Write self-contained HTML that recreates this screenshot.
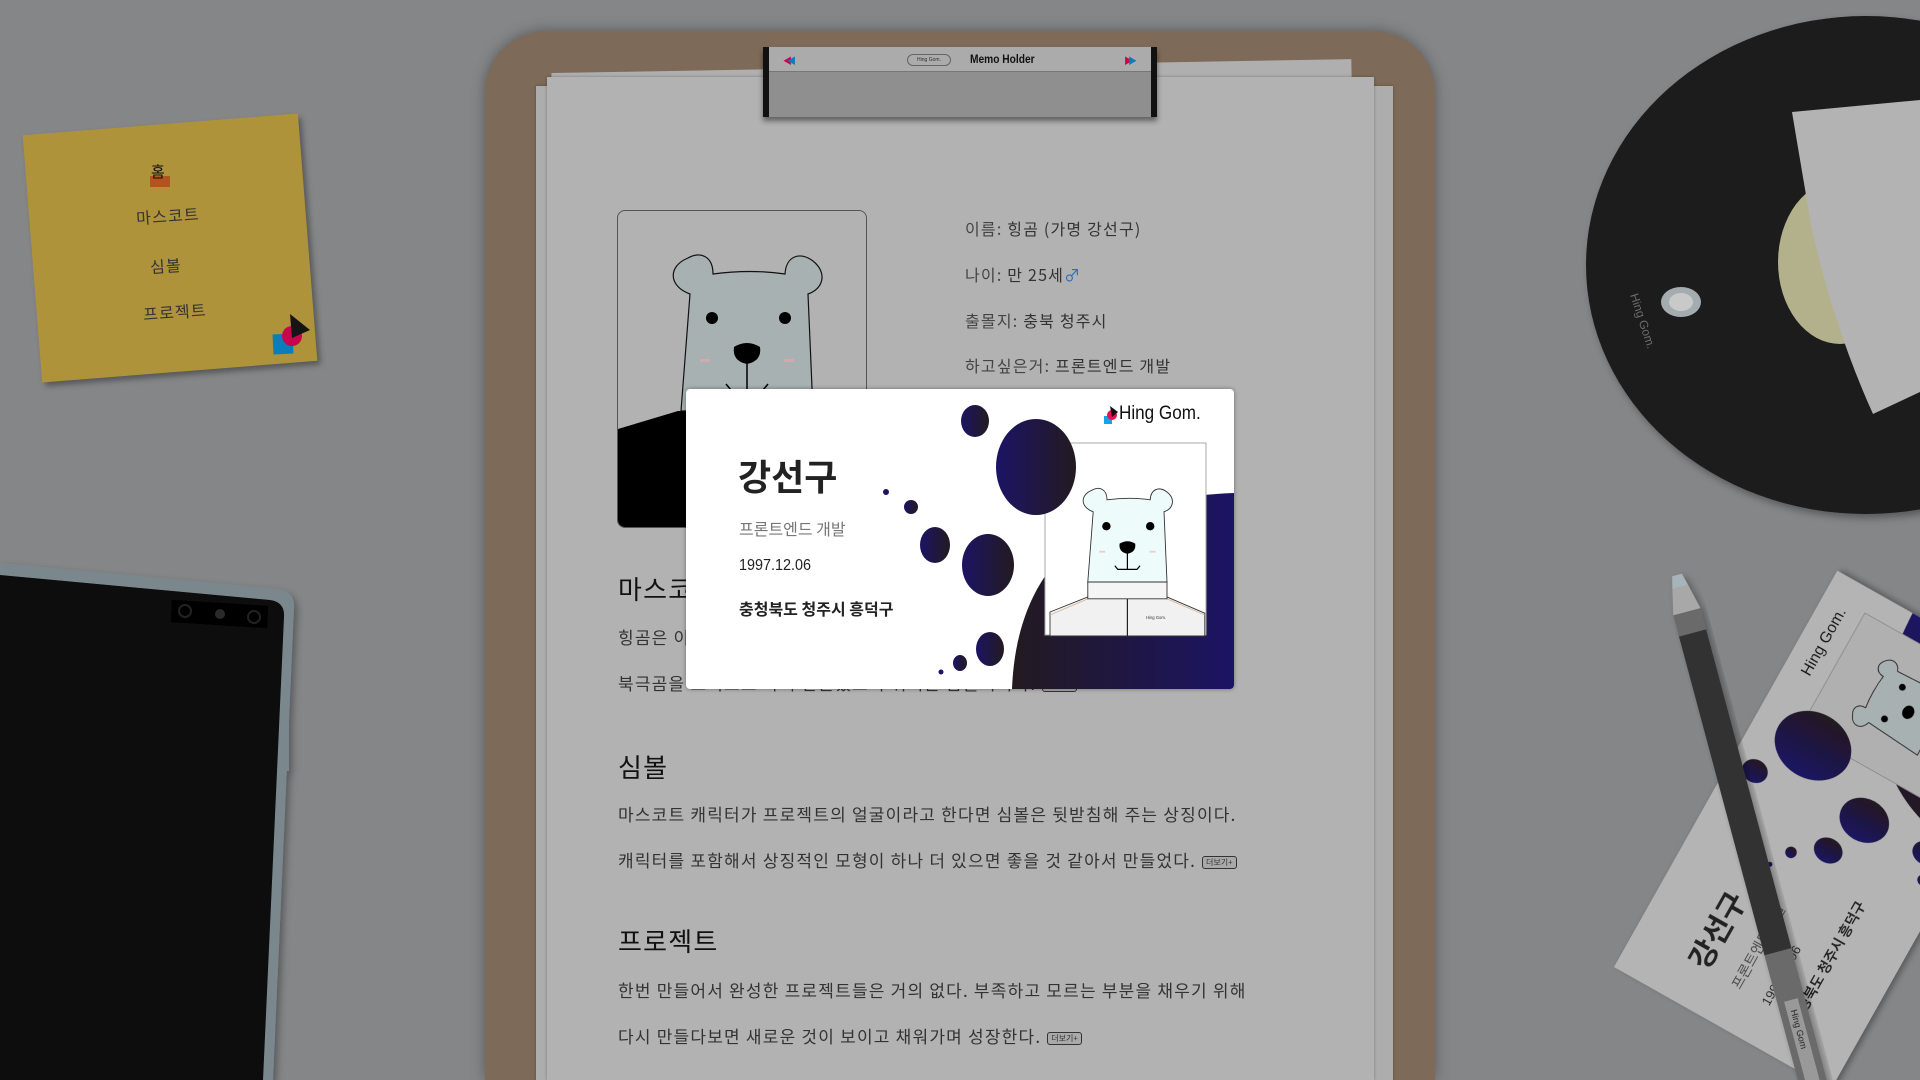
<!DOCTYPE html>
<html><head><meta charset="utf-8">
<style>
*{margin:0;padding:0;box-sizing:border-box}
html,body{width:1920px;height:1080px;overflow:hidden;background:#858688;font-family:"Liberation Sans","Noto Sans CJK KR",sans-serif}
#root{position:relative;width:1920px;height:1080px;overflow:hidden}
.abs{position:absolute}
.hw{font-family:"Noto Sans CJK KR","NanumGothic",sans-serif;color:#333;letter-spacing:1.2px;white-space:nowrap}
.more{display:inline-block;font-size:8px;border:1px solid #333;border-radius:3px;padding:0 3px;letter-spacing:0;vertical-align:middle;margin-left:6px;line-height:11px;background:#a9a9a9}
</style></head><body><div id="root">

<svg class="abs" style="left:0;top:0" width="1920" height="1080">
 <defs>
  <linearGradient id="g1" x1="0" x2="1" y1="0" y2="0"><stop offset="0" stop-color="#1b1464"/><stop offset="1" stop-color="#231a20"/></linearGradient>
  <linearGradient id="g2" x1="0" x2="1" y1="0" y2="0"><stop offset="0" stop-color="#231a20"/><stop offset="1" stop-color="#1b1464"/></linearGradient>
  <filter id="sh" x="-10%" y="-10%" width="130%" height="130%"><feDropShadow dx="3" dy="4" stdDeviation="4" flood-color="#000" flood-opacity=".35"/></filter>
 </defs>
 <g filter="url(#sh)">
  <path d="M0,563 L278,589 Q295,591 294,608 L273,1080 L0,1080 Z" fill="#7a888d"/>
  <path d="M0,575 L270,600 Q285,602 284,617 L263,1080 L0,1080 Z" fill="#080808"/>
  <rect x="283" y="723" width="6" height="48" fill="#7a888d"/>
  <path d="M172,600 L268,606 L267,628 L171,622 Z" fill="#000"/>
  <circle cx="185" cy="611" r="6" fill="none" stroke="#222" stroke-width="2"/>
  <circle cx="220" cy="614" r="5" fill="#2a2a2a"/>
  <circle cx="254" cy="617" r="6" fill="none" stroke="#222" stroke-width="2"/>
 </g>
 <g filter="url(#sh)">
  <ellipse cx="1866" cy="265" rx="280" ry="249" fill="#1a1a1a"/>
  <ellipse cx="1840" cy="262" rx="62" ry="82" fill="#b2b18c"/>
  <path d="M1792,112 L1920,100 L1920,392 L1873,414 Q1835,330 1812,230 Q1800,160 1792,112 Z" fill="#b3b3b3"/>
  <ellipse cx="1681" cy="302" rx="20" ry="15" fill="#a5acb0"/>
  <ellipse cx="1681" cy="302" rx="12" ry="9" fill="#c9c9c9"/>
  <text x="0" y="0" transform="translate(1630,295) rotate(72)" font-size="12" fill="#6c6c6c" font-family="Liberation Sans">Hing Gom.</text>
 </g>
 <g filter="url(#sh)" transform="translate(1614,967) rotate(-60.6) scale(0.83)">
  <rect x="0" y="0" width="548" height="300" fill="#b4b4b4"/>
  <path d="M326,300 C330,200 380,110 548,104 L548,300 Z" fill="url(#g2)"/>
  <rect x="359" y="54" width="161" height="192" fill="#b0b0b0" stroke="#888"/>
  <g transform="translate(364,73) scale(0.6)">
   <path d="M72,83 C50,75 50,55 70,47 C82,40 95,45 95,63 Q133,58 167,63 C168,45 182,40 195,50 C210,62 205,78 190,83 L195,200 L63,200 Z" fill="#a7b1b1" stroke="#222" stroke-width="2"/>
   <circle cx="94" cy="107" r="7" fill="#000"/><circle cx="167" cy="107" r="7" fill="#000"/>
   <ellipse cx="129" cy="142" rx="14" ry="12" fill="#000"/>
  </g>
  <ellipse cx="289" cy="32" rx="14" ry="16" fill="url(#g1)"/>
  <ellipse cx="350" cy="78" rx="40" ry="48" fill="url(#g1)"/>
  <circle cx="200" cy="103" r="3" fill="#1b1464"/>
  <ellipse cx="225" cy="118" rx="7" ry="7" fill="url(#g1)"/>
  <ellipse cx="249" cy="156" rx="15" ry="18" fill="url(#g1)"/>
  <ellipse cx="302" cy="176" rx="26" ry="31" fill="url(#g1)"/>
  <ellipse cx="304" cy="260" rx="14" ry="17" fill="url(#g1)"/>
  <ellipse cx="274" cy="274" rx="7" ry="8" fill="url(#g1)"/>
  <text x="50" y="100" font-size="36" font-weight="bold" fill="#222" font-family="Noto Sans CJK KR,sans-serif">강선구</text>
  <text x="50" y="146" font-size="17" fill="#444" font-family="Noto Sans CJK KR,sans-serif">프론트엔드 개발</text>
  <text x="50" y="186" font-size="16" fill="#222">1997.12.06</text>
  <text x="50" y="228" font-size="17" font-weight="bold" fill="#222" font-family="Noto Sans CJK KR,sans-serif">충청북도 청주시 흥덕구</text>
  <text x="420" y="34" font-size="19" fill="#111">Hing Gom.</text>
 </g>
 <g filter="url(#sh)" transform="translate(1677,575) rotate(-15)">
  <path d="M-5,0 L5,0 L8,12 L-8,12 Z" fill="#a7b4b9"/>
  <path d="M-8,12 L8,12 L14,38 L-14,38 Z" fill="#a8a8a8"/>
  <rect x="-14" y="38" width="28" height="22" fill="#6b6b6b"/>
  <rect x="-14" y="60" width="28" height="330" fill="#333"/>
  <rect x="-14" y="390" width="28" height="150" fill="#6b6b6b"/>
  <rect x="-7" y="440" width="14" height="90" fill="#999"/>
  <text x="0" y="0" transform="translate(-3,450) rotate(90)" font-size="9" fill="#111">Hing Gom</text>
 </g>
</svg>

<div class="abs" style="left:32px;top:124px;width:276px;height:248px;background:#af933a;transform:rotate(-4.5deg);box-shadow:3px 4px 6px rgba(0,0,0,.35)"></div>
<div class="abs" style="left:148px;top:165px;width:24px;height:22px;">
 <div class="abs" style="left:2px;top:11px;width:20px;height:11px;background:#b3541e"></div>
 <div class="abs hw" style="left:3px;top:-4px;font-size:15px;color:#111;letter-spacing:0">홈</div>
</div>
<div class="abs hw" style="left:136px;top:203px;font-size:16px;transform:rotate(-4deg)">마스코트</div>
<div class="abs hw" style="left:150px;top:253px;font-size:16px;transform:rotate(-4deg)">심볼</div>
<div class="abs hw" style="left:143px;top:299px;font-size:16px;transform:rotate(-4deg)">프로젝트</div>
<svg class="abs" style="left:270px;top:310px" width="45" height="50">
 <rect x="3" y="24" width="20" height="20" fill="#0a7dbb" transform="rotate(-3 13 34)"/>
 <circle cx="22" cy="26" r="10" fill="#c8064d"/>
 <path d="M20,4 L40,20 L22,28 Z" fill="#151515"/>
</svg>

<div class="abs" style="left:485px;top:31px;width:950px;height:1049px;background:#7e6a58;border-radius:62px 62px 0 0;box-shadow:0 0 14px rgba(0,0,0,.35)"></div>
<div class="abs" style="left:536px;top:86px;width:857px;height:994px;background:#adadad;box-shadow:0 0 3px rgba(0,0,0,.3)"></div>
<div class="abs" style="left:560px;top:66px;width:800px;height:990px;background:#afafaf;transform:rotate(-1deg)"></div>
<div class="abs" style="left:547px;top:77px;width:827px;height:1003px;background:#b2b2b2;box-shadow:0 0 3px rgba(0,0,0,.3)"></div>

<div class="abs" style="left:763px;top:47px;width:394px;height:70px;background:#8f8f8f;border-left:6px solid #111;border-right:6px solid #111;box-shadow:0 4px 5px rgba(0,0,0,.45)">
 <div class="abs" style="left:0;top:0;width:100%;height:25px;background:#ababab;border-bottom:1px solid #777"></div>
 <div class="abs" style="left:14px;top:7px;font-size:9px;color:#c8064d">◀<span style="color:#0a7dbb;margin-left:-5px">◀</span></div>
 <div class="abs" style="left:138px;top:7px;width:44px;height:12px;border:1px solid #666;border-radius:7px;font-size:5px;color:#333;text-align:center;line-height:10px">Hing Gom.</div>
 <div class="abs" style="left:201px;top:5px;font-size:12px;font-weight:bold;color:#111;transform:scaleX(.85);transform-origin:left">Memo Holder</div>
 <div class="abs" style="right:14px;top:7px;font-size:9px;color:#c8064d">▶<span style="color:#0a7dbb;margin-left:-5px">▶</span></div>
</div>

<div class="abs" style="left:617px;top:210px;width:250px;height:318px;border:1px solid #555;border-radius:8px;overflow:hidden;background:#b2b2b2">
<svg width="250" height="318">
 <path d="M0,218 L60,200 L200,200 L250,212 L250,318 L0,318 Z" fill="#000"/>
 <path d="M72,83 C50,75 50,55 70,47 C82,40 95,45 95,63 Q133,58 167,63 C168,45 182,40 195,50 C210,62 205,78 190,83 L195,200 L63,200 Z" fill="#a7b1b1" stroke="#111" stroke-width="1.2"/>
 <circle cx="94" cy="107" r="6" fill="#000"/><circle cx="167" cy="107" r="6" fill="#000"/>
 <path d="M116,136 Q129,128 142,136 Q144,150 129,153 Q114,150 116,136 Z" fill="#000"/>
 <path d="M129,152 L129,178 M108,173 L113,179 L145,179 L150,173" stroke="#000" stroke-width="1.5" fill="none"/>
 <rect x="82" y="148" width="10" height="3" fill="#d5a8ad"/><rect x="166" y="148" width="10" height="3" fill="#d5a8ad"/>
</svg>
</div>

<div class="abs hw" style="left:965px;top:216px;font-size:16px"><span style="color:#444">이름:</span> 힝곰 (가명 강선구)</div>
<div class="abs hw" style="left:965px;top:262px;font-size:16px"><span style="color:#444">나이:</span> 만 25세<span style="color:#2a6fb8">♂</span></div>
<div class="abs hw" style="left:965px;top:308px;font-size:16px"><span style="color:#444">출몰지:</span> 충북 청주시</div>
<div class="abs hw" style="left:965px;top:353px;font-size:16px"><span style="color:#444">하고싶은거:</span> 프론트엔드 개발</div>
<div class="abs hw" style="left:965px;top:401px;font-size:16px"><span style="color:#444">할 줄 아는거:</span> <i>PhotoShop</i></div>
<div class="abs hw" style="left:965px;top:491px;font-size:16px"><span style="color:#444">자격증:</span> 컴퓨터그래픽스 포토샵 1급</div>

<div class="abs hw" style="left:618px;top:570px;font-size:26px;color:#111">마스코트</div>
<div class="abs hw" style="left:618px;top:624px;font-size:17px">힝곰은 이 프로젝트의 마스코트 캐릭터로 모든 페이지에 등장한다.</div>
<div class="abs hw" style="left:618px;top:670px;font-size:17px">북극곰을 모티브로 하여 만들었으며 귀여운 곰돌이이다.<span class="more">더보기+</span></div>

<div class="abs hw" style="left:618px;top:748px;font-size:26px;color:#111">심볼</div>
<div class="abs hw" style="left:618px;top:801px;font-size:17px">마스코트 캐릭터가 프로젝트의 얼굴이라고 한다면 심볼은 뒷받침해 주는 상징이다.</div>
<div class="abs hw" style="left:618px;top:847px;font-size:17px">캐릭터를 포함해서 상징적인 모형이 하나 더 있으면 좋을 것 같아서 만들었다.<span class="more">더보기+</span></div>

<div class="abs hw" style="left:618px;top:922px;font-size:26px;color:#111">프로젝트</div>
<div class="abs hw" style="left:618px;top:977px;font-size:17px">한번 만들어서 완성한 프로젝트들은 거의 없다. 부족하고 모르는 부분을 채우기 위해</div>
<div class="abs hw" style="left:618px;top:1023px;font-size:17px">다시 만들다보면 새로운 것이 보이고 채워가며 성장한다.<span class="more">더보기+</span></div>

<div class="abs" style="left:686px;top:389px;width:548px;height:300px;background:#fff;border-radius:4px;overflow:hidden;box-shadow:0 0 4px rgba(0,0,0,.4)">
<svg width="548" height="300" style="position:absolute;left:0;top:0">
 <path d="M326,300 C330,200 380,110 548,104 L548,300 Z" fill="url(#g2)"/>
 <rect x="359" y="54" width="161" height="192" fill="#fff" stroke="#aaa"/>
 <g transform="translate(364,73) scale(0.6)">
  <path d="M0,290 L0,250 L63,225 L195,225 L258,252 L258,290 Z" fill="#f1f1f1" stroke="#333" stroke-width="1.5"/>
  <path d="M0,255 L63,228 M258,255 L195,228" stroke="#d8b89a" stroke-width="1.5"/>
  <path d="M129,228 L129,290" stroke="#222" stroke-width="2"/>
  <path d="M63,200 L63,228 L195,228 L195,200 Z" fill="#f5f5f5" stroke="#333" stroke-width="1.5"/>
  <path d="M72,83 C50,75 50,55 70,47 C82,40 95,45 95,63 Q133,58 167,63 C168,45 182,40 195,50 C210,62 205,78 190,83 L195,200 L63,200 Z" fill="#eefbfb" stroke="#333" stroke-width="1.5"/>
  <circle cx="94" cy="107" r="7" fill="#000"/><circle cx="167" cy="107" r="7" fill="#000"/>
  <path d="M116,136 Q129,128 142,136 Q144,150 129,153 Q114,150 116,136 Z" fill="#000"/>
  <path d="M129,152 L129,178 M108,173 L113,179 L145,179 L150,173" stroke="#000" stroke-width="2" fill="none"/>
  <rect x="82" y="148" width="10" height="3" fill="#f3c8cf"/><rect x="166" y="148" width="10" height="3" fill="#f3c8cf"/>
  <text x="160" y="262" font-size="7" fill="#333">Hing Gom.</text>
 </g>
 <ellipse cx="289" cy="32" rx="14" ry="16" fill="url(#g1)"/>
 <ellipse cx="350" cy="78" rx="40" ry="48" fill="url(#g1)"/>
 <circle cx="200" cy="103" r="3" fill="#1b1464"/>
 <ellipse cx="225" cy="118" rx="7" ry="7" fill="url(#g1)"/>
 <ellipse cx="249" cy="156" rx="15" ry="18" fill="url(#g1)"/>
 <ellipse cx="302" cy="176" rx="26" ry="31" fill="url(#g1)"/>
 <ellipse cx="304" cy="260" rx="14" ry="17" fill="url(#g1)"/>
 <ellipse cx="274" cy="274" rx="7" ry="8" fill="url(#g1)"/>
 <circle cx="255" cy="283" r="2.5" fill="#1b1464"/>
 <rect x="418" y="27" width="8" height="8" fill="#14a4e6"/>
 <circle cx="426" cy="26" r="5" fill="#e8104f"/>
 <path d="M424,17 L432,23 L426,28 Z" fill="#111"/>
</svg>
 <div class="abs" style="left:433px;top:14px;font-size:19px;color:#111;transform:scaleX(.9);transform-origin:left;white-space:nowrap">Hing Gom.</div>
 <div class="abs" style="left:52px;top:60px;font-size:36px;font-weight:bold;color:#222;font-family:'Noto Sans CJK KR',sans-serif">강선구</div>
 <div class="abs" style="left:53px;top:127px;font-size:16px;color:#777;font-family:'Noto Sans CJK KR',sans-serif">프론트엔드 개발</div>
 <div class="abs" style="left:53px;top:168px;font-size:16px;color:#222;transform:scaleX(.9);transform-origin:left">1997.12.06</div>
 <div class="abs" style="left:53px;top:207px;font-size:16px;font-weight:bold;color:#222;font-family:'Noto Sans CJK KR',sans-serif;white-space:nowrap">충청북도 청주시 흥덕구</div>
</div>
</div></body></html>
